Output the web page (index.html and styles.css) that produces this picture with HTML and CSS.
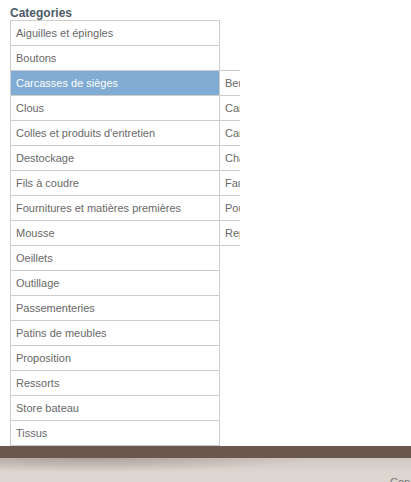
FILE: index.html
```html
<!DOCTYPE html>
<html lang="fr">
<head>
    <meta charset="utf-8">
    <title>Categories</title>
    <link rel="stylesheet" href="styles.css">
</head>
<body>
    <div class="page">
        <div class="sidebar">
            <h2 class="block-title">Categories</h2>
            <ul class="cat-menu">
                <li><a href="#">Aiguilles et épingles</a></li>
                <li><a href="#">Boutons</a></li>
                <li class="open">
                    <a href="#">Carcasses de sièges</a>
                    <ul class="sub-menu">
                        <li><a href="#">Bergères</a></li>
                        <li><a href="#">Canapés</a></li>
                        <li><a href="#">Carcasses diverses</a></li>
                        <li><a href="#">Chaises</a></li>
                        <li><a href="#">Fauteuils</a></li>
                        <li><a href="#">Poufs</a></li>
                        <li><a href="#">Repose-pieds</a></li>
                    </ul>
                </li>
                <li><a href="#">Clous</a></li>
                <li><a href="#">Colles et produits d'entretien</a></li>
                <li><a href="#">Destockage</a></li>
                <li><a href="#">Fils à coudre</a></li>
                <li><a href="#">Fournitures et matières premières</a></li>
                <li><a href="#">Mousse</a></li>
                <li><a href="#">Oeillets</a></li>
                <li><a href="#">Outillage</a></li>
                <li><a href="#">Passementeries</a></li>
                <li><a href="#">Patins de meubles</a></li>
                <li><a href="#">Proposition</a></li>
                <li><a href="#">Ressorts</a></li>
                <li><a href="#">Store bateau</a></li>
                <li><a href="#">Tissus</a></li>
            </ul>
        </div>
    </div>

    <div class="footer">
        <div class="footer-bar"></div>
        <div class="footer-body">
            <div class="footer-links"><a href="#">Conditions générales de vente</a></div>
        </div>
    </div>
</body>
</html>
```

FILE: styles.css
```css
* {
    box-sizing: border-box;
    margin: 0;
    padding: 0;
}

body {
    font-family: Arial, 'Liberation Sans', sans-serif;
    font-size: 11px;
    color: #686868;
    background: #ddd5cf;
}

a {
    color: inherit;
    text-decoration: none;
}

.page {
    background: #fff;
}

.sidebar {
    width: 240px;
    overflow: hidden;
    padding: 6px 0 0 10px;
}

.block-title {
    font-size: 12px;
    line-height: 14px;
    font-weight: bold;
    color: #4d5b69;
}

.cat-menu {
    list-style: none;
    width: 210px;
    border: 1px solid #ccc;
    border-bottom: none;
}

.cat-menu li {
    position: relative;
    height: 25px;
    border-bottom: 1px solid #ccc;
}

.cat-menu a {
    display: block;
    height: 24px;
    line-height: 24px;
    padding-left: 5px;
    white-space: nowrap;
}

.cat-menu li.open > a {
    background: #80abd3;
    color: #fff;
}

/* Sous-menu ouvert */
.sub-menu {
    position: absolute;
    top: -1px;
    left: 209px;
    width: 180px;
    list-style: none;
    border-top: 1px solid #ccc;
    background: #fff;
}

.footer-bar {
    height: 12px;
    background: #6a584e;
}

.footer-body {
    position: relative;
    height: 40px;
    background: linear-gradient(to bottom, #d0c7c1, #ddd5cf 14px);
}

.footer-body::before {
    content: "";
    position: absolute;
    top: 0;
    left: 0;
    width: 360px;
    height: 14px;
    background: radial-gradient(ellipse 60% 100% at 25% 0, rgba(90, 75, 65, 0.3), rgba(90, 75, 65, 0));
}

.footer-links {
    padding: 18px 0 0 390px;
    white-space: nowrap;
    overflow: hidden;
    color: #777;
}
```
